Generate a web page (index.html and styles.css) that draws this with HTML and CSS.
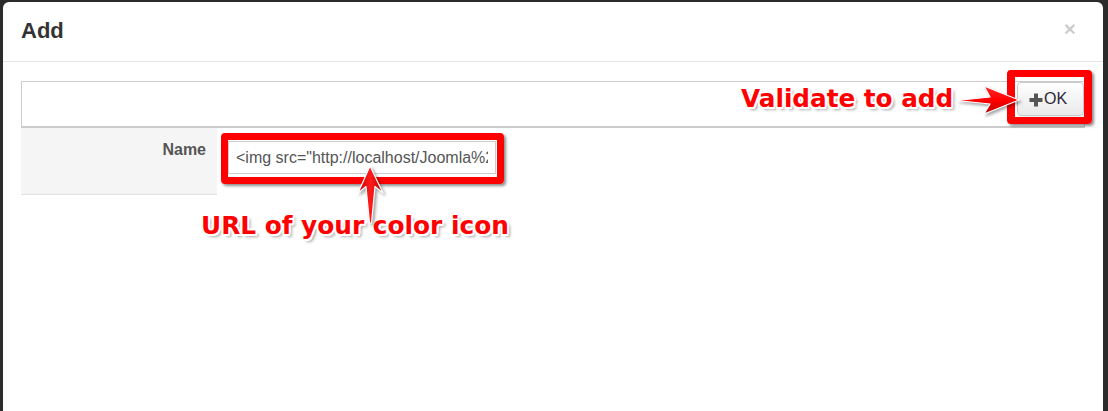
FILE: index.html
```html
<!DOCTYPE html>
<html>
<head>
<meta charset="utf-8">
<title>Add</title>
<link rel="stylesheet" href="styles.css">
</head>
<body>
<div class="modal">
  <div class="modal-header">
    <h3 class="modal-title">Add</h3>
    <span class="close">&times;</span>
  </div>
  <div class="modal-body">
    <div class="toolbar">
      <button class="btn-ok" type="button">
        <svg class="plus" width="16" height="16" viewBox="0 0 16 16"><path d="M6 1.5h4v4.5h4.5v4H10v4.5H6V10H1.5V6H6z" fill="#555"/></svg>
        <span>OK</span>
      </button>
    </div>
    <div class="row">
      <div class="label-cell">Name</div>
      <div class="field-cell">
        <input class="field" type="text" value="&lt;img src=&quot;http://localhost/Joomla%20" readonly>
      </div>
    </div>
  </div>

  <div class="mark mark-ok"></div>
  <div class="mark mark-name"></div>

  <div class="note note-validate">Validate to add</div>
  <div class="note note-url">URL of your color icon</div>

  <svg class="arrow arrow-right" width="80" height="40" viewBox="949 82 80 40">
    <defs>
      <linearGradient id="gr" x1="0" y1="0" x2="0" y2="1">
        <stop offset="0" stop-color="#ff2a2a"/>
        <stop offset="0.5" stop-color="#ff0000"/>
        <stop offset="1" stop-color="#c00000"/>
      </linearGradient>
    </defs>
    <path d="M957,100.5 L990,97 L984,86 L1019,100 L984,114 L990,104 Z" fill="url(#gr)" stroke="#fff" stroke-width="1.2" stroke-linejoin="round"/>
  </svg>
  <svg class="arrow arrow-up" width="40" height="70" viewBox="350 160 40 70">
    <defs>
      <linearGradient id="gu" x1="0" y1="0" x2="1" y2="0">
        <stop offset="0" stop-color="#d00000"/>
        <stop offset="0.5" stop-color="#ff1a1a"/>
        <stop offset="1" stop-color="#c00000"/>
      </linearGradient>
    </defs>
    <path d="M370,166 L383,193 L375,186.5 L371.5,223 L369.5,223 L366,186.5 L358,193 Z" fill="url(#gu)" stroke="#fff" stroke-width="1.2" stroke-linejoin="round"/>
  </svg>
</div>
</body>
</html>
```
FILE: styles.css
```css
html, body {
  margin: 0;
  padding: 0;
}
body {
  background: #2b2b2b;
  height: 411px;
  overflow: hidden;
  font-family: "Liberation Sans", Arial, sans-serif;
}
.modal {
  position: relative;
  margin: 2px 5px 0 3px;
  height: 409px;
  background: #fff;
  border-radius: 6px 6px 0 0;
}
.modal-header {
  box-sizing: border-box;
  border-bottom: 1px solid #e5e5e5;
  height: 60px;
  display: flex;
  justify-content: space-between;
  align-items: flex-start;
  padding: 16px 27px 0 18px;
}
.modal-title {
  margin: 0;
  font-size: 22px;
  line-height: 26px;
  font-weight: bold;
  color: #333;
}
.close {
  margin-top: 0;
  font-size: 21px;
  line-height: 21px;
  font-weight: bold;
  color: #000;
  opacity: 0.2;
}
.modal-body {
  padding: 19px 18px 0 18px;
}
.toolbar {
  height: 44px;
  border: 1px solid #ccc;
  border-bottom-width: 2px;
  display: flex;
  justify-content: flex-end;
  align-items: flex-start;
}
.btn-ok {
  width: 67px;
  height: 34px;
  margin: 0;
  padding: 0 0 0 10px;
  display: flex;
  align-items: center;
  border: 1px solid #c8c8c8;
  border-radius: 4px;
  background: linear-gradient(#ffffff, #e9e9e9);
  box-shadow: 0 1px 2px rgba(0,0,0,0.08);
  font-family: "Liberation Sans", Arial, sans-serif;
  font-size: 16px;
  color: #2a2a3a;
}
.btn-ok .plus {
  display: block;
  margin-top: 1px;
}
.row {
  display: flex;
}
.label-cell {
  box-sizing: border-box;
  width: 196px;
  height: 67px;
  background: #f5f5f5;
  border-bottom: 1px solid #e3e3e3;
  padding: 12px 11px 0 0;
  text-align: right;
  font-size: 16px;
  line-height: 20px;
  font-weight: bold;
  color: #555;
}
.field-cell {
  padding: 13px 0 0 11px;
}
.field {
  box-sizing: border-box;
  width: 268px;
  height: 33px;
  padding: 0 7px;
  border: 1px solid #ccc;
  font-family: "Liberation Sans", Arial, sans-serif;
  font-size: 16px;
  color: #555;
  background: #fff;
  outline: none;
}
.mark {
  position: absolute;
  box-sizing: border-box;
  border: 7px solid #ff0000;
  border-radius: 4px;
  box-shadow: 2px 2px 3px rgba(0,0,0,0.45);
}
.mark-ok {
  left: 1004px;
  top: 68px;
  width: 85px;
  height: 54px;
  border-width: 7px 8px 7px 8px;
}
.mark-name {
  left: 218px;
  top: 131px;
  width: 283px;
  height: 51px;
}
.note {
  position: absolute;
  font-family: "DejaVu Sans", Verdana, sans-serif;
  font-weight: bold;
  color: #ff0000;
  white-space: nowrap;
  text-shadow:
    -1.5px -1.5px 0 #fff, 1.5px -1.5px 0 #fff, -1.5px 1.5px 0 #fff, 1.5px 1.5px 0 #fff,
    0 -2px 0 #fff, 0 2px 0 #fff, -2px 0 0 #fff, 2px 0 0 #fff,
    3px 3px 3px rgba(0,0,0,0.35);
}
.note-validate {
  left: 738px;
  top: 85px;
  font-size: 24.7px;
  line-height: 24px;
}
.note-url {
  left: 198px;
  top: 211px;
  font-size: 24.8px;
  line-height: 25px;
}
.arrow {
  position: absolute;
  overflow: visible;
  filter: drop-shadow(2px 2px 1.5px rgba(0,0,0,0.35));
}
.arrow-right {
  left: 946px;
  top: 80px;
}
.arrow-up {
  left: 347px;
  top: 158px;
}
```
